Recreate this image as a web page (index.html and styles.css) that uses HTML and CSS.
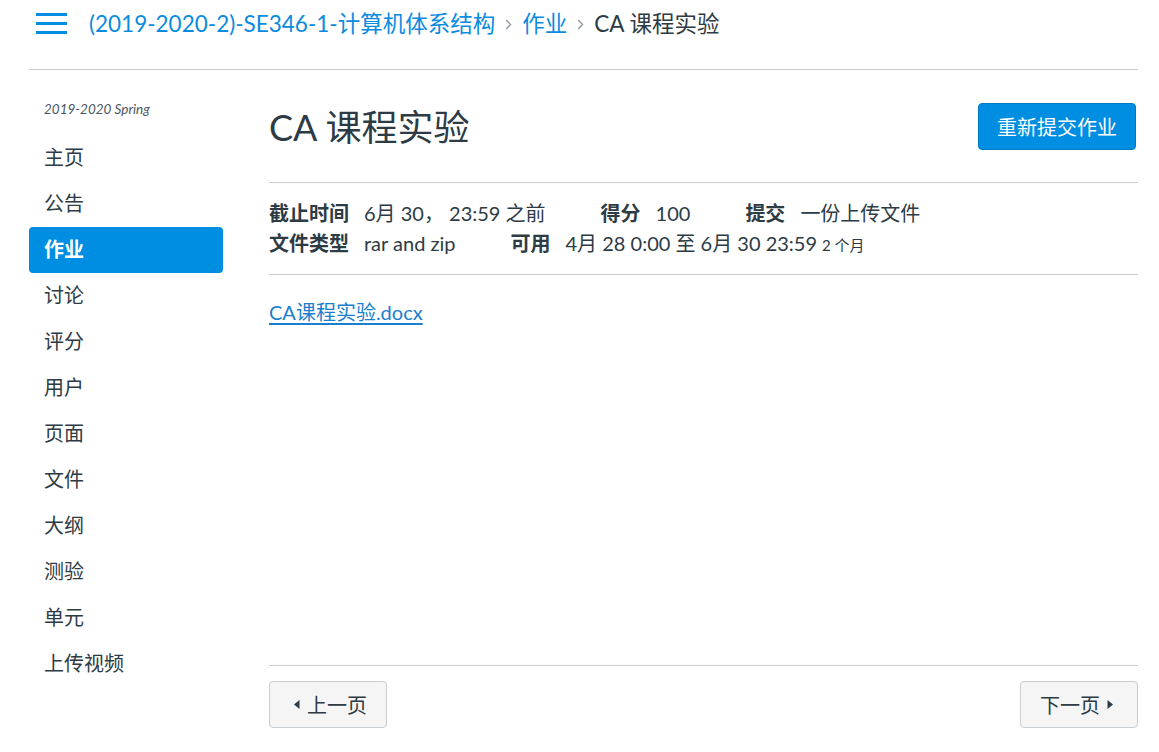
FILE: index.html
```html
<!DOCTYPE html>
<html lang="zh-CN">
<head>
<meta charset="utf-8">
<title>CA 课程实验</title>
<link rel="stylesheet" href="styles.css">
</head>
<body>
<div class="page">
  <header class="topbar">
    <button class="hamburger" aria-label="菜单">
      <svg width="31" height="21" viewBox="0 0 31 21"><rect x="0" y="0" width="31" height="3" fill="#008EE2"/><rect x="0" y="9" width="31" height="3" fill="#008EE2"/><rect x="0" y="18" width="31" height="3" fill="#008EE2"/></svg>
    </button>
    <nav class="crumbs">
      <a class="crumb" href="#">(2019-2020-2)-SE346-1-计算机体系结构</a>
      <svg class="sep" width="7" height="11" viewBox="0 0 7 11"><path d="M1.2 1 L5.6 5.5 L1.2 10" fill="none" stroke="#8B969E" stroke-width="1.3"/></svg>
      <a class="crumb" href="#">作业</a>
      <svg class="sep" width="7" height="11" viewBox="0 0 7 11"><path d="M1.2 1 L5.6 5.5 L1.2 10" fill="none" stroke="#8B969E" stroke-width="1.3"/></svg>
      <span class="crumb current">CA 课程实验</span>
    </nav>
  </header>

  <div class="layout">
    <aside class="sidebar">
      <div class="term">2019-2020 Spring</div>
      <ul class="menu">
        <li><a href="#">主页</a></li>
        <li><a href="#">公告</a></li>
        <li><a href="#" class="active">作业</a></li>
        <li><a href="#">讨论</a></li>
        <li><a href="#">评分</a></li>
        <li><a href="#">用户</a></li>
        <li><a href="#">页面</a></li>
        <li><a href="#">文件</a></li>
        <li><a href="#">大纲</a></li>
        <li><a href="#">测验</a></li>
        <li><a href="#">单元</a></li>
        <li><a href="#">上传视频</a></li>
      </ul>
    </aside>

    <main class="content">
      <div class="title-row">
        <h1 class="title">CA 课程实验</h1>
        <button class="btn-primary">重新提交作业</button>
      </div>

      <div class="details">
        <div class="row">
          <div class="item"><span class="label">截止时间</span><span class="value">6月 30， 23:59 之前</span></div>
          <div class="item"><span class="label">得分</span><span class="value">100</span></div>
          <div class="item"><span class="label">提交</span><span class="value">一份上传文件</span></div>
        </div>
        <div class="row">
          <div class="item"><span class="label">文件类型</span><span class="value">rar and zip</span></div>
          <div class="item"><span class="label">可用</span><span class="value">4月 28 0:00 至 6月 30 23:59<small class="dur">2 个月</small></span></div>
        </div>
      </div>

      <div class="description">
        <a href="#" class="file-link">CA课程实验.docx</a>
      </div>

      <div class="pager">
        <button class="btn-page"><svg class="tri" width="6" height="9" viewBox="0 0 6 9"><path d="M5.5 0 L0 4.5 L5.5 9 Z" fill="#2D3B45"/></svg>上一页</button>
        <button class="btn-page">下一页<svg class="tri right" width="6" height="9" viewBox="0 0 6 9"><path d="M0.5 0 L6 4.5 L0.5 9 Z" fill="#2D3B45"/></svg></button>
      </div>
    </main>
  </div>
</div>
</body>
</html>
```

FILE: styles.css
```css
* { box-sizing: border-box; }

html, body {
  margin: 0;
  padding: 0;
  background: #ffffff;
}

body {
  font-family: Lato, "Noto Sans CJK SC", "Noto Sans", sans-serif;
  color: #2D3B45;
  font-size: 20px;
}

a { text-decoration: none; }

.page {
  margin: 0 21px 0 29px;
}

.topbar {
  height: 70px;
  padding: 0 0 22px 7px;
  border-bottom: 1px solid #C7CDD1;
  display: flex;
  align-items: center;
}

.hamburger {
  background: none;
  border: 0;
  padding: 0;
  margin: 0;
  width: 31px;
  height: 21px;
  display: block;
}

.hamburger svg { display: block; }

.crumbs {
  margin-left: 22px;
  display: flex;
  align-items: center;
  font-size: 22.5px;
  line-height: 30px;
}

.crumb {
  color: #0A8BE0;
}

.crumb.current {
  color: #2D3B45;
}

.sep {
  margin: 2px 10px 0 10px;
  display: block;
}

.layout {
  display: flex;
  align-items: flex-start;
}

.sidebar {
  width: 194px;
  flex: none;
}

.term {
  margin-top: 30px;
  padding-left: 15px;
  font-size: 13.5px;
  line-height: 18px;
  font-style: italic;
  color: #4a5660;
}

.menu {
  list-style: none;
  margin: 17px 0 0 0;
  padding: 0;
}

.menu a {
  display: block;
  height: 46px;
  line-height: 44px;
  padding-left: 15px;
  color: #2D3B45;
  font-size: 20px;
  border-radius: 4px;
}

.menu a.active {
  background: #008EE2;
  color: #ffffff;
  font-weight: 700;
}

.content {
  flex: 1;
  margin-left: 46px;
  padding-top: 33px;
}

.title-row {
  display: flex;
  justify-content: space-between;
  align-items: center;
  height: 47px;
}

.title {
  margin: 0;
  font-size: 36px;
  font-weight: 400;
  line-height: 44px;
  color: #2D3B45;
}

.btn-primary {
  height: 47px;
  padding: 0 18px;
  background: #008EE2;
  color: #ffffff;
  border: 1px solid #0079C2;
  border-radius: 4px;
  font-family: inherit;
  font-size: 20px;
  margin-right: 2px;
}

.details {
  margin-top: 32px;
  border-top: 1px solid #C7CDD1;
  border-bottom: 1px solid #C7CDD1;
  padding: 15px 0 16px;
}

.row {
  display: flex;
  line-height: 30px;
  height: 30px;
}

.item {
  display: flex;
  margin-right: 55px;
}

.label {
  font-weight: 700;
  margin-right: 15px;
}

.value {
  white-space: nowrap;
}

.dur {
  font-size: 15px;
  margin-left: 5px;
}

.description {
  height: 390px;
  padding-top: 22px;
  line-height: 30px;
}

.file-link {
  color: #1a7fcf;
  text-decoration: underline;
  text-underline-offset: 3px;
}

.pager {
  border-top: 1px solid #C7CDD1;
  padding-top: 15px;
  display: flex;
  justify-content: space-between;
}

.btn-page {
  height: 47px;
  padding: 0 19px;
  background: #F5F5F5;
  border: 1px solid #C7CDD1;
  border-radius: 4px;
  font-family: inherit;
  font-size: 20px;
  color: #2D3B45;
  display: flex;
  align-items: center;
}

.tri {
  display: block;
  margin: 0 7px 0 5px;
}

.tri.right {
  margin: 0 5px 0 7px;
}
```
